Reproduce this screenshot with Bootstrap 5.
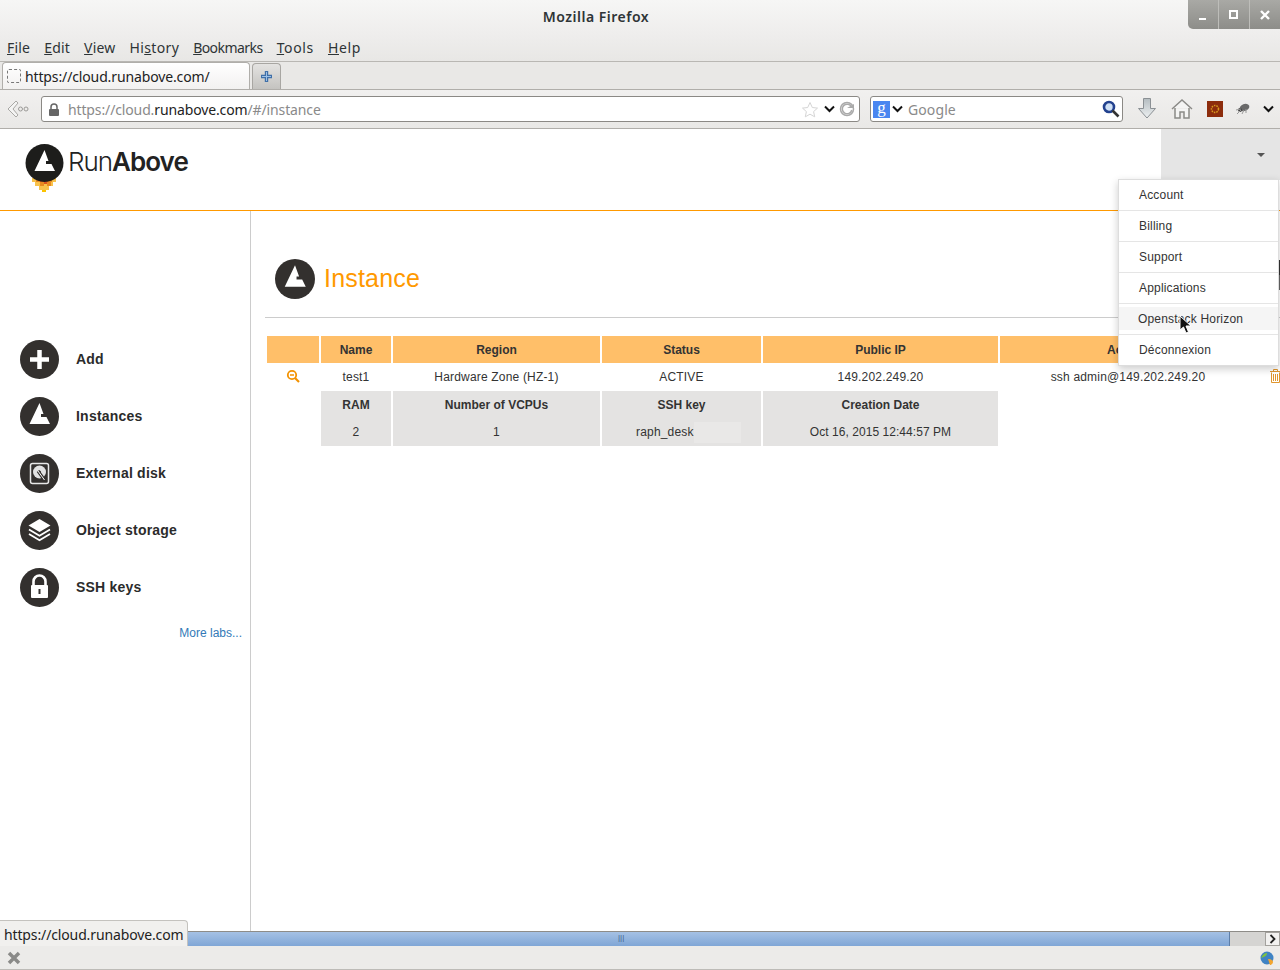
<!DOCTYPE html>
<html lang="en">
<head>
  <meta charset="UTF-8">
  <title>RunAbove - Instance</title>
  <link href="https://cdn.jsdelivr.net/npm/bootstrap@5.3.0/dist/css/bootstrap.min.css" rel="stylesheet">
  <style>
    html, body { height: 100%; overflow: hidden; }
    body { font-family: "Liberation Sans", Arial, sans-serif; font-size: 12px; color: #333; letter-spacing: .18px; background: #fff; }
    .ui-font { font-family: "Noto Sans", "Open Sans", sans-serif; letter-spacing: -.13px; }
    .frame { height: 970px; position: relative; }
    .titlebar { height: 36px; background: linear-gradient(#f6f6f5, #eeedec); }
    .win-title { font-size: 14px; font-weight: 600; color: #2e3436; padding: 6px 0 0 4px; letter-spacing: .5px; }
    .win-ctrls { width: 92px; height: 29px; background: linear-gradient(#a9a9a5, #8d8d89); border-bottom-left-radius: 5px; }
    .win-ctrls > div { flex: 1; border-left: 1px solid #bdbdb9; }
    .win-ctrls > div:first-child { border-left: 0; }
    .menubar { height: 26px; background: linear-gradient(#eeedec, #e8e7e5); border-bottom: 1px solid #b9b7b3; font-size: 14px; color: #2e3436; padding-left: 7px; gap: 14px; line-height: 24px; letter-spacing: .2px; }
    .mn-wide { letter-spacing: .35px; }
    .mn-wider { letter-spacing: .65px; }
    .mn-tight { letter-spacing: -.55px; }
    .tabstrip { height: 28px; background: #e9e8e6; border-bottom: 1px solid #b0aeaa; padding-left: 2px; }
    .ff-tab { width: 248px; height: 27px; background: linear-gradient(#fff, #f2f1f0); border: 1px solid #b0aeaa; border-bottom: 0; border-radius: 4px 4px 0 0; font-size: 14px; color: #222; padding-left: 4px; gap: 4px; }
    .tab-fav { width: 14px; height: 14px; border: 1px dashed #777; border-radius: 2px; }
    .tab-add { width: 29px; height: 26px; margin-left: 2px; background: linear-gradient(#e4e3e1, #c4c3c0); border: 1px solid #a8a6a2; border-bottom: 0; border-radius: 4px 4px 0 0; }
    .navrow { height: 39px; background: linear-gradient(#f1f0ef, #e9e8e6); border-bottom: 1px solid #b0aeaa; padding-left: 6px; }
    .back-slot { width: 35px; }
    .url-box { width: 819px; height: 26px; background: #fff; border: 1px solid #8b8985; border-radius: 3px; font-size: 14px; color: #8a8a8a; padding: 0 4px 0 6px; }
    .url-box b { font-weight: 400; color: #222; }
    .star-gap { margin-right: 3px; }
    .search-box { width: 253px; height: 26px; margin-left: 10px; background: #fff; border: 1px solid #8b8985; border-radius: 3px; font-size: 14px; color: #8a8a8a; padding: 0 2px; letter-spacing: .1px; }
    .search-label { padding-left: 1px; }
    .g-mark { width: 17px; height: 17px; background: #4a86f0; color: #fff; font-family: "Liberation Serif", serif; font-size: 17px; line-height: 14px; text-align: center; }
    .chev-gap { margin: 0 4px 0 2px; }
    .slot-first { width: 36px; margin-left: 6px; }
    .slot-a { width: 34px; }
    .slot-b { width: 32px; }
    .slot-c { width: 24px; }
    .page-head { height: 82px; border-bottom: 1px solid #f90; }
    .brand { padding: 15px 0 0 25px; gap: 5px; }
    .brand-word { font-family: Inter, sans-serif; font-size: 26px; line-height: 26px; letter-spacing: -1px; color: #222; margin: 5px 0 0 -1px; font-weight: 300; }
    .brand-word b { font-weight: 600; }
    .user-box { width: 119px; height: 51px; background: #e5e5e5; }
    .user-caret { width: 0; height: 0; border-left: 4px solid transparent; border-right: 4px solid transparent; border-top: 4px solid #555; margin: 24px 15px 0 0; }
    .page-body { min-height: 0; }
    .side-col { width: 251px; flex: none; border-right: 1px solid #ccc; padding: 120px 8px 0 20px; }
    .side-item { height: 57px; gap: 17px; font-size: 14px; font-weight: 700; color: #2b2b2b; letter-spacing: .22px; }
    .side-ico { width: 39px; height: 39px; flex: none; }
    .more-labs { color: #337ab7; text-decoration: none; font-size: 12px; margin-top: 8px; letter-spacing: 0; }
    .main-col { min-width: 0; padding-left: 14px; }
    .inst-head { margin-top: 48px; padding-left: 10px; gap: 9px; height: 59px; border-bottom: 1px solid #ccc; color: #f90; font-size: 25px; letter-spacing: .2px; }
    .inst-head span { padding-top: 1px; margin-bottom: 17px; }
    .inst-table { border-collapse: separate; border-spacing: 2px; table-layout: fixed; width: 1021px; margin: 16px 0 0 0; text-align: center; }
    .inst-table th, .inst-table td { padding: 0; vertical-align: middle; }
    .inst-table th { letter-spacing: 0; }
    .inst-table thead th { background: #ffbf69; height: 27px; }
    .inst-table .data-row td { height: 24px; }
    .inst-table .sub-cell { background: #e4e3e2; height: 55px; }
    .sub-head { height: 27px; line-height: 29px; font-weight: 700; letter-spacing: 0; }
    .sub-val { height: 28px; line-height: 28px; }
    .sub-date { letter-spacing: .05px; }
    .key-wrap { padding-left: 34px; text-align: left; white-space: nowrap; }
    .key-mask { display: inline-block; width: 47px; height: 21px; background: #e9e8e7; vertical-align: middle; }
    .row-ico { display: block; margin-top: -2px; }
    .zoom-ico { margin-left: auto; margin-right: auto; }
    .trash-ico { margin-left: 12px; }
    .user-menu { top: 179px; right: 1px; left: auto; width: 161px; min-width: 0; padding: 0; margin: 0; border: 1px solid #ddd; border-radius: 0; box-shadow: 0 3px 8px rgba(0,0,0,.2); font-size: 12px; color: #333; }
    .user-menu .dropdown-item { height: 31px; line-height: 30px; padding: 0 0 0 20px; color: #333; font-size: 12px; border-bottom: 1px solid #e5e5e5; }
    .user-menu li:last-child .dropdown-item { border-bottom: 0; height: 30px; }
    .user-menu .item-hover { background: linear-gradient(#fff 3px, #f5f5f5 3px, #f5f5f5 26px, #fff 26px); padding-left: 19px; }
    .mouse-ptr { position: absolute; left: 1179px; top: 315px; z-index: 1001; }
    .edge-mark { position: absolute; left: 1279px; top: 260px; width: 1px; height: 30px; background: linear-gradient(#333 50%, #666 50%); }
    .hscroll { height: 15px; flex: none; background: #d5d4d2; border-top: 1px solid #8e8c88; }
    .hscroll-thumb { width: 1230px; background: linear-gradient(#a5c1e4, #80a6d6); border-right: 1px solid #5d7ea8; font-size: 8px; color: #3e5f8c; line-height: 12px; padding-left: 618px; letter-spacing: 0; }
    .hscroll-btn { width: 15px; background: #f2f1f0; border: 1px solid #a3a19d; }
    .statusrow { height: 24px; flex: none; background: #ecebe9; border-bottom: 1px solid #bdbbb7; padding: 0 5px 0 7px; }
    .link-tip { position: absolute; left: 0; top: 920px; width: 188px; height: 26px; background: #f1f0ee; border: 1px solid #c4c2be; border-left: 0; border-bottom: 0; border-top-right-radius: 4px; font-size: 14px; color: #222; padding-left: 4px; line-height: 27px; }
  </style>
</head>
<body>
  <div class="frame d-flex flex-column">
    <!-- Window title -->
    <div class="titlebar d-flex ui-font">
      <div class="win-title flex-grow-1 text-center">Mozilla Firefox</div>
      <div class="win-ctrls d-flex">
        <div class="d-flex align-items-center justify-content-center">
          <svg width="12" height="12"><rect x="2" y="9" width="7" height="2" fill="#fff"/></svg>
        </div>
        <div class="d-flex align-items-center justify-content-center">
          <svg width="12" height="12"><rect x="2" y="2" width="7" height="7" fill="none" stroke="#fff" stroke-width="2"/></svg>
        </div>
        <div class="d-flex align-items-center justify-content-center">
          <svg width="12" height="12"><path d="M2 2l8 8M10 2l-8 8" stroke="#fff" stroke-width="2.4"/></svg>
        </div>
      </div>
    </div>

    <!-- Menu -->
    <div class="menubar d-flex ui-font">
      <span><u>F</u>ile</span><span><u>E</u>dit</span><span><u>V</u>iew</span><span class="mn-wide">Hi<u>s</u>tory</span><span class="mn-tight"><u>B</u>ookmarks</span><span class="mn-wider"><u>T</u>ools</span><span class="mn-wider"><u>H</u>elp</span>
    </div>

    <!-- Tabs -->
    <div class="tabstrip d-flex align-items-end ui-font">
      <div class="ff-tab d-flex align-items-center"><span class="tab-fav"></span>https://cloud.runabove.com/</div>
      <div class="tab-add d-flex align-items-center justify-content-center">
        <svg width="13" height="13"><path d="M6.500 1v11M1 6.500h11" stroke="#3f6fa8" stroke-width="3.400"/><path d="M6.500 2v9M2 6.500h9" stroke="#9cc0e6" stroke-width="1"/></svg>
      </div>
    </div>

    <!-- Location bar -->
    <div class="navrow d-flex align-items-center ui-font">
      <div class="back-slot">
        <svg width="24" height="22"><path d="M10 3L2 11l8 8 2-2-5-6 5-6z" fill="#f4f4f3" stroke="#a9a8a5"/><circle cx="14.500" cy="11" r="2" fill="none" stroke="#9b9a97"/><circle cx="20" cy="11" r="2" fill="none" stroke="#9b9a97"/></svg>
      </div>
      <div class="url-box d-flex align-items-center">
        <svg class="me-2" width="12" height="13"><rect x="1" y="6" width="10" height="7" rx="1" fill="#666"/><path d="M3 6V4a3 3 0 0 1 6 0v2" fill="none" stroke="#666" stroke-width="1.500"/></svg>
        <span class="flex-grow-1">https://cloud.<b>runabove.com</b>/#/instance</span>
        <svg class="star-gap" width="18" height="17"><path d="M9 1.500l2.300 5 5.200.6-3.900 3.500 1.100 5.200L9 13.200l-4.700 2.600 1.100-5.200L1.500 7.100l5.200-.6z" fill="#fff" stroke="#d5d5d5"/></svg>
        <svg class="chev-gap" width="11" height="8"><path d="M1 1.500l4.500 4.500L10 1.500" fill="none" stroke="#111" stroke-width="2"/></svg>
        <svg width="16" height="16"><circle cx="8" cy="8" r="6.500" fill="none" stroke="#aaa" stroke-width="1.500"/><path d="M12.500 6A4.800 4.800 0 1 0 12.800 9" fill="none" stroke="#aaa" stroke-width="1.500"/><path d="M8 7h7V3z" fill="#aaa"/></svg>
      </div>
      <div class="search-box d-flex align-items-center">
        <span class="g-mark">g</span>
        <svg class="chev-gap" width="11" height="8"><path d="M1 1.500l4.500 4.500L10 1.500" fill="none" stroke="#111" stroke-width="2"/></svg>
        <span class="flex-grow-1 search-label">Google</span>
        <svg width="18" height="18"><circle cx="7" cy="7" r="5" fill="#cfe0f5" stroke="#23428f" stroke-width="2.600"/><path d="M10.500 10.500l6 6" stroke="#333" stroke-width="2.600"/></svg>
      </div>
      <div class="slot-first d-flex justify-content-center">
        <svg width="20" height="24"><defs><linearGradient id="dl" x1="0" y1="0" x2="0" y2="1"><stop offset="0" stop-color="#b4bcc0"/><stop offset="1" stop-color="#eef1f2"/></linearGradient></defs><path d="M6.500 1.500h7v10h5L10 21 1.500 11.500h5z" fill="url(#dl)" stroke="#8b9094"/></svg>
      </div>
      <div class="slot-a d-flex justify-content-center">
        <svg width="22" height="22"><path d="M1 11L11 2l10 9M4 10v10h5v-6h4v6h5V10" fill="#f4f4f3" stroke="#8b8a87" stroke-width="1.500"/></svg>
      </div>
      <div class="slot-b d-flex justify-content-center">
        <svg width="16" height="16"><rect width="16" height="16" fill="#8c2c0c"/><circle cx="8" cy="8" r="3.500" fill="none" stroke="#d99a1e" stroke-width="1.500" stroke-dasharray="1.500 1"/></svg>
      </div>
      <div class="slot-c d-flex justify-content-center">
        <svg width="16" height="14"><ellipse cx="9.500" cy="5.500" rx="5" ry="3.500" fill="#6a6a6a" transform="rotate(-20 9.500 5.500)"/><circle cx="5" cy="8" r="2" fill="#444"/><path d="M2 12l4-4M1 8l5-1M7 12l2-4M11 11l0-4" stroke="#999"/></svg>
      </div>
      <svg class="ms-2" width="11" height="8"><path d="M1 1.500l4.500 4.500L10 1.500" fill="none" stroke="#111" stroke-width="2"/></svg>
    </div>

    <!-- Page header -->
    <div class="page-head d-flex justify-content-between">
      <div class="brand d-flex">
        <svg width="39" height="48" viewBox="0 0 39 48">
          <g fill="#f8c24b"><rect x="7" y="34" width="24" height="4"/><rect x="10" y="38" width="18" height="4"/><rect x="14" y="42" width="10" height="4"/></g>
          <g fill="#e88a20"><rect x="11" y="34" width="4" height="4"/><rect x="23" y="34" width="4" height="4"/><rect x="15" y="38" width="4" height="4"/><rect x="22" y="38" width="4" height="4"/></g>
          <g fill="#d9531e"><rect x="15" y="34" width="8" height="4"/><rect x="19" y="38" width="3" height="2"/></g>
          <rect x="17" y="46" width="4" height="2" fill="#fbc300"/>
          <circle cx="19.500" cy="19" r="19" fill="#1d1d1b"/>
          <path d="M19.500 6l4 11h-2.500v3h5.500l3.500 7H9.500z" fill="#fff"/>
        </svg>
        <div class="brand-word">Run<b>Above</b></div>
      </div>
      <div class="user-box d-flex justify-content-end"><span class="user-caret"></span></div>
    </div>

    <div class="page-body d-flex flex-grow-1 overflow-hidden">
      <!-- Side menu -->
      <div class="side-col d-flex flex-column">
        <div class="side-item d-flex align-items-center">
          <svg class="side-ico" viewBox="0 0 39 39"><circle cx="19.500" cy="19.500" r="19.500" fill="#33302e"/><path d="M19.500 10v19M10 19.500h19" stroke="#fff" stroke-width="4.500"/></svg>
          Add
        </div>
        <div class="side-item d-flex align-items-center">
          <svg class="side-ico" viewBox="0 0 39 39"><circle cx="19.500" cy="19.500" r="19.500" fill="#33302e"/><path d="M19.500 6l4 11h-2.500v3h5.500l3.500 7H9.500z" fill="#fff"/></svg>
          Instances
        </div>
        <div class="side-item d-flex align-items-center">
          <svg class="side-ico" viewBox="0 0 39 39"><circle cx="19.500" cy="19.500" r="19.500" fill="#33302e"/><rect x="10.500" y="9.500" width="18" height="20" rx="2" fill="#33302e" stroke="#e8e8e8" stroke-width="1.500"/><circle cx="19.500" cy="18" r="6.500" fill="#e2e2e2"/><circle cx="19.500" cy="18" r="1.500" fill="#33302e"/><path d="M18 17l6.500 9" stroke="#33302e" stroke-width="3"/><path d="M18 17l6.500 9" stroke="#fff"/></svg>
          External disk
        </div>
        <div class="side-item d-flex align-items-center">
          <svg class="side-ico" viewBox="0 0 39 39"><circle cx="19.500" cy="19.500" r="19.500" fill="#33302e"/><path d="M19.500 8l11 6.500-11 6.500-11-6.500z" fill="#fff"/><path d="M9 18.500l10.500 6.300L30 18.500M9 23l10.500 6.300L30 23" fill="none" stroke="#fff" stroke-width="1.800"/></svg>
          Object storage
        </div>
        <div class="side-item d-flex align-items-center">
          <svg class="side-ico" viewBox="0 0 39 39"><circle cx="19.500" cy="19.500" r="19.500" fill="#33302e"/><path d="M13.500 17v-3.500a6 6 0 0 1 12 0V17" fill="none" stroke="#fff" stroke-width="2.600"/><rect x="11" y="17" width="17" height="13" rx="1" fill="#fff"/><rect x="18.500" y="21" width="2" height="5" fill="#33302e"/></svg>
          SSH keys
        </div>
        <a class="more-labs text-end" href="#">More labs...</a>
      </div>

      <!-- Instance list -->
      <div class="main-col flex-grow-1">
        <div class="inst-head d-flex">
          <svg width="40" height="40" viewBox="0 0 39 39"><circle cx="19.500" cy="19.500" r="19.500" fill="#33302e"/><path d="M19.500 6l4 11h-2.500v3h5.500l3.500 7H9.500z" fill="#fff"/></svg>
          <span>Instance</span>
        </div>
        <table class="inst-table">
          <colgroup><col style="width:52px"><col style="width:70px"><col style="width:207px"><col style="width:159px"><col style="width:235px"><col style="width:256px"><col style="width:30px"></colgroup>
          <thead>
            <tr><th></th><th>Name</th><th>Region</th><th>Status</th><th>Public IP</th><th>Access</th><th class="bg-white"></th></tr>
          </thead>
          <tbody>
            <tr class="data-row">
              <td><svg class="row-ico zoom-ico" width="14" height="14"><circle cx="6" cy="6" r="4.200" fill="none" stroke="#f39200" stroke-width="1.800"/><path d="M4 6h4" stroke="#f39200" stroke-width="1.500"/><path d="M9 9l4 4" stroke="#f39200" stroke-width="2.200"/></svg></td>
              <td>test1</td><td>Hardware Zone (HZ-1)</td><td>ACTIVE</td><td>149.202.249.20</td><td>ssh admin@149.202.249.20</td>
              <td class="text-start"><svg class="row-ico trash-ico" width="11" height="14"><path d="M0 2.500h11M3.500 2.500V.5h4v2M1.500 3.500v10h8v-10M3.500 5v7M5.500 5v7M7.500 5v7" fill="none" stroke="#e0962e"/></svg></td>
            </tr>
            <tr>
              <td></td>
              <td class="sub-cell"><div class="sub-head">RAM</div><div class="sub-val">2</div></td>
              <td class="sub-cell"><div class="sub-head">Number of VCPUs</div><div class="sub-val">1</div></td>
              <td class="sub-cell"><div class="sub-head">SSH key</div><div class="sub-val key-wrap">raph_desk<span class="key-mask"></span></div></td>
              <td class="sub-cell"><div class="sub-head">Creation Date</div><div class="sub-val sub-date">Oct 16, 2015 12:44:57 PM</div></td>
              <td></td><td></td>
            </tr>
          </tbody>
        </table>
      </div>
    </div>

    <!-- Horizontal scrollbar -->
    <div class="hscroll d-flex justify-content-between">
      <div class="hscroll-thumb">|||</div>
      <div class="hscroll-btn d-flex align-items-center justify-content-center">
        <svg width="7" height="10"><path d="M1.500 1l4 4-4 4" fill="none" stroke="#222" stroke-width="1.800"/></svg>
      </div>
    </div>

    <!-- Status bar -->
    <div class="statusrow d-flex align-items-center justify-content-between">
      <svg width="14" height="14"><path d="M2 2l10 10M12 2L2 12" stroke="#8a8a88" stroke-width="3.500"/></svg>
      <svg width="16" height="16"><circle cx="8" cy="8" r="6.500" fill="#3f83c4"/><path d="M2 8c2-4 4-5 6-5 0 3-3 4-6 5z" fill="#7ec23f"/><path d="M9 9c3 0 5 1 5 3s-2 3-3 3z" fill="#f3a52e"/></svg>
    </div>

    <!-- Overlays -->
    <ul class="dropdown-menu show user-menu">
      <li><a class="dropdown-item" href="#">Account</a></li>
      <li><a class="dropdown-item" href="#">Billing</a></li>
      <li><a class="dropdown-item" href="#">Support</a></li>
      <li><a class="dropdown-item" href="#">Applications</a></li>
      <li><a class="dropdown-item item-hover" href="#">Openstack Horizon</a></li>
      <li><a class="dropdown-item" href="#">Déconnexion</a></li>
    </ul>
    <svg class="mouse-ptr" width="14" height="20"><path d="M1 1v14l3.500-3 2.500 6 2.500-1-2.500-6H12z" fill="#111" stroke="#fff"/></svg>
    <div class="edge-mark"></div>
    <div class="link-tip ui-font">https://cloud.runabove.com</div>
  </div>
  <script src="https://cdn.jsdelivr.net/npm/bootstrap@5.3.0/dist/js/bootstrap.bundle.min.js"></script>
</body>
</html>
